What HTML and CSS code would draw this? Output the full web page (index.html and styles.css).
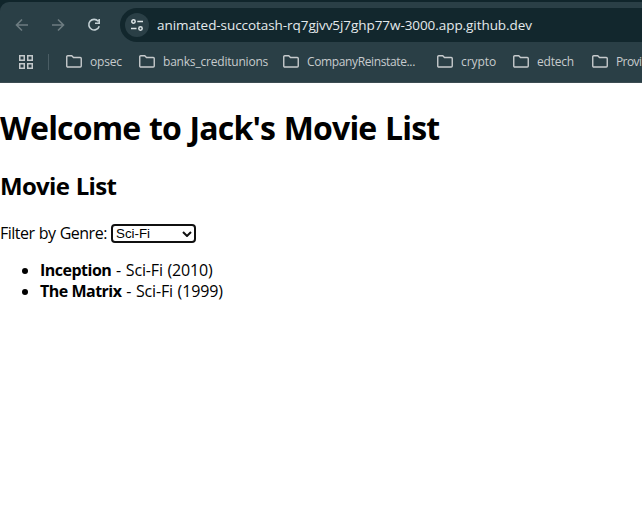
FILE: index.html
```html
<!DOCTYPE html>
<html lang="en">
<head>
<meta charset="utf-8">
<title>Movie List</title>
<link rel="stylesheet" href="styles.css">
</head>
<body>
<svg class="defs" width="0" height="0">
  <symbol id="folder" viewBox="0 0 16 13"><path d="M.75 11V1.75a1 1 0 0 1 1-1h4L7.5 2.5h6.75a1 1 0 0 1 1 1V11a1 1 0 0 1-1 1H1.75a1 1 0 0 1-1-1z" fill="none" stroke="currentColor" stroke-width="1.4"/></symbol>
</svg>
<header class="chrome">
  <div class="panel">
    <div class="toolbar">
      <svg class="nav" viewBox="0 0 14 14"><path d="M13 7H2M7 1.5L1.5 7L7 12.5"/></svg>
      <svg class="nav" viewBox="0 0 14 14"><path d="M1 7h11M7 1.5L12.5 7L7 12.5"/></svg>
      <svg class="nav reload" viewBox="0 0 14 14"><path d="M11.2 3.3A5.3 5.3 0 1 0 12.2 8.2M12.2 1v4.2H8"/></svg>
      <div class="address">
        <span class="site"><svg width="14" height="14" viewBox="0 0 14 14"><circle cx="3.5" cy="3.5" r="1.7"/><path d="M7.3 3.5H13M1 10.5h5.5"/><circle cx="10.5" cy="10.5" r="1.7"/></svg></span>
        <span class="url">animated-succotash-rq7gjvv5j7ghp77w-3000.app.github.dev</span>
      </div>
    </div>
    <nav class="bookmarks">
      <svg class="apps" width="14" height="14" viewBox="0 0 14 14"><path d="M.75.75h4.5v4.5H.75zM8.75.75h4.5v4.5h-4.5zM.75 8.75h4.5v4.5H.75zM8.75 8.75h4.5v4.5h-4.5z"/></svg>
      <span class="divider"></span>
      <a class="bookmark opsec"><svg><use href="#folder"/></svg><span>opsec</span></a>
      <a class="bookmark banks"><svg><use href="#folder"/></svg><span>banks_creditunions</span></a>
      <a class="bookmark company"><svg><use href="#folder"/></svg><span>CompanyReinstate...</span></a>
      <a class="bookmark crypto"><svg><use href="#folder"/></svg><span>crypto</span></a>
      <a class="bookmark edtech"><svg><use href="#folder"/></svg><span>edtech</span></a>
      <a class="bookmark last"><svg><use href="#folder"/></svg><span>Provi</span></a>
    </nav>
  </div>
</header>
<main>
  <h1>Welcome to Jack's Movie List</h1>
  <h2>Movie List</h2>
  <div class="filter">
    <label for="genre">Filter by Genre:</label>
    <span class="select">
      <select id="genre"><option>Sci-Fi</option></select>
      <svg class="chevron" width="10" height="6" viewBox="0 0 10 6"><path d="M1 1l4 4 4-4"/></svg>
    </span>
  </div>
  <ul>
    <li><strong>Inception</strong><span class="detail"> - Sci-Fi (2010)</span></li>
    <li><strong>The Matrix</strong><span class="detail"> - Sci-Fi (1999)</span></li>
  </ul>
</main>
</body>
</html>
```
FILE: styles.css
```css
* { box-sizing: border-box; }
body {
  margin: 0;
  height: 509px;
  overflow: hidden;
  background: #fff;
  color: #000;
  font: 16px/21px "Open Sans", sans-serif;
}
.defs { position: absolute; }
.chrome { height: 83px; padding-top: 2px; background: #10252b; }
.panel {
  height: 81px;
  overflow: hidden;
  border-radius: 9px 0 0 0;
  border-bottom: 1px solid #3c4c52;
  background: #2a3f46;
}
.toolbar { display: flex; align-items: center; height: 46px; padding-left: 15px; }
.nav {
  flex: none;
  width: 14px;
  height: 14px;
  margin-right: 22px;
  fill: none;
  stroke: #6d7c81;
  stroke-width: 1.6;
}
.nav.reload { margin-right: 19px; stroke: #c3d0d4; }
.address {
  display: flex;
  flex: 1;
  align-items: center;
  height: 34px;
  padding-left: 5px;
  border-radius: 17px 0 0 17px;
  background: #12272d;
}
.site {
  display: flex;
  flex: none;
  align-items: center;
  justify-content: center;
  width: 24px;
  height: 24px;
  margin-right: 8px;
  border-radius: 50%;
  background: #2a3f46;
}
.site svg { fill: none; stroke: #dce4e6; stroke-width: 1.5; }
.url { color: #e4eaec; font-size: 13.5px; white-space: nowrap; letter-spacing: -0.065px; }
.bookmarks { display: flex; align-items: center; height: 27px; padding: 0 0 0 19px; }
.apps { flex: none; fill: none; stroke: #c4c9cb; stroke-width: 1.5; }
.divider { flex: none; width: 1px; height: 16px; margin: 0 17px 0 15px; background: #4a5d64; }
.bookmark {
  display: flex;
  flex: none;
  align-items: center;
  gap: 8px;
  color: #c7cbcd;
  font-size: 12px;
  letter-spacing: -0.2px;
  white-space: nowrap;
}
.bookmark svg { width: 16px; height: 13px; }
.opsec { width: 73px; }
.banks { width: 144px; }
.company { width: 154px; letter-spacing: -0.37px; }
.crypto { width: 76px; letter-spacing: -0.05px; }
.edtech { width: 79px; }
.last { letter-spacing: -0.6px; }
h1 { margin: 23px 0 0; font-size: 32px; line-height: 43px; letter-spacing: -0.85px; word-spacing: 1.2px; white-space: nowrap; }
h2 { margin: 21px 0 0; font-size: 24px; line-height: 32px; letter-spacing: -0.7px; word-spacing: 1px; }
.filter { display: flex; align-items: center; height: 21px; margin-top: 20px; }
.filter label { width: 111px; padding-top: 1px; letter-spacing: -0.5px; word-spacing: 0.5px; white-space: nowrap; }
.select { position: relative; top: 1px; display: flex; }
select {
  appearance: none;
  width: 85px;
  height: 19px;
  margin: 0;
  padding: 0 3px;
  border: 2px solid #101010;
  border-radius: 4px;
  background: #fff;
  color: #000;
  font: 13.333px/15px "Liberation Sans", sans-serif;
}
.chevron { position: absolute; top: 7px; right: 4px; fill: none; stroke: #101010; stroke-width: 2; }
ul { margin: 17px 0 0; padding-left: 40px; }
li { height: 21px; white-space: pre; }
strong { letter-spacing: -0.5px; }
.detail { letter-spacing: -0.15px; word-spacing: 0.7px; }
```
